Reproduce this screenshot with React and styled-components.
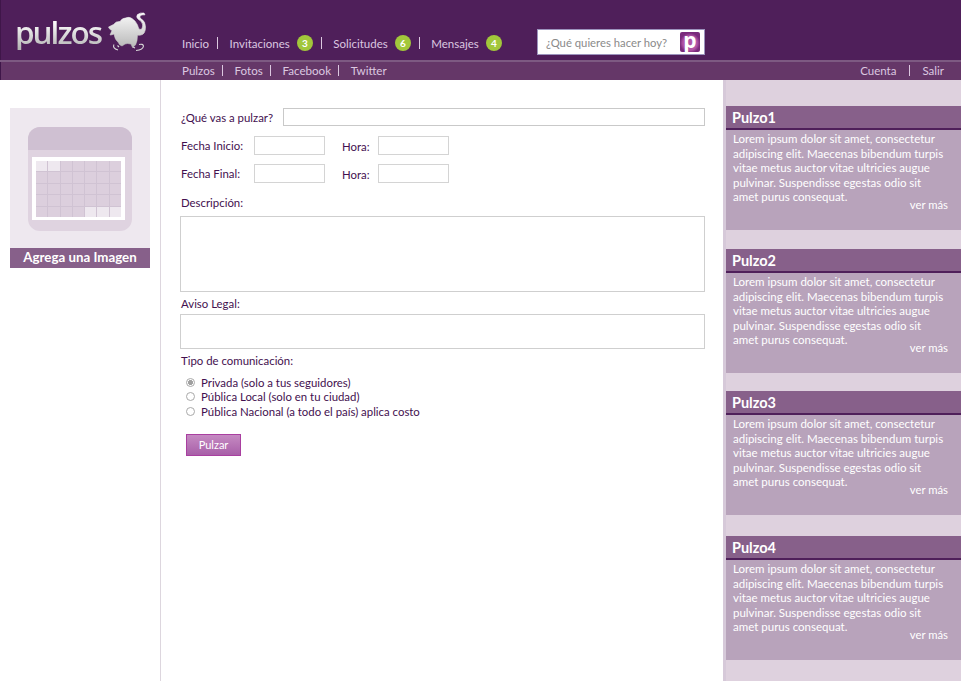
import React from "react";
import styled, { createGlobalStyle } from "styled-components";

const GlobalStyle = createGlobalStyle`
    html, body {
        margin: 0;
        padding: 0;
        background: #fff;
    }
    body {
        font-family: Lato, "Open Sans", sans-serif;
    }
`;

const mainLinks = [
    { label: "Inicio" },
    { label: "Invitaciones", count: 3 },
    { label: "Solicitudes", count: 6 },
    { label: "Mensajes", count: 4 },
];
const subLinks = ["Pulzos", "Fotos", "Facebook", "Twitter"];
const pulzos = [
    { title: "Pulzo1", gap: 19 },
    { title: "Pulzo2", gap: 18 },
    { title: "Pulzo3", gap: 21 },
    { title: "Pulzo4", gap: 0 },
];
const lorem =
    "Lorem ipsum dolor sit amet, consectetur adipiscing elit. Maecenas bibendum turpis vitae metus auctor vitae ultricies augue pulvinar. Suspendisse egestas odio sit amet purus consequat.";

function Elephant() {
    return (
        <ElephantSvg width="42" height="40" viewBox="0 0 42 40">
            <defs>
                <linearGradient id="silver" x1="0" y1="0" x2="0" y2="1">
                    <stop offset="0" stopColor="#fafafa" />
                    <stop offset="1" stopColor="#b8b8b8" />
                </linearGradient>
            </defs>
            <path
                fill="url(#silver)"
                stroke="url(#silver)"
                strokeWidth="0.6"
                strokeLinejoin="round"
                d="M1.5 15 L6.5 12.5 Q9 9 13 9.5 Q15 6 18.5 6 Q22 4.5 25 6.5 Q29 9 30.5 13 Q31.5 17 33 17.5 Q35.5 17.5 35.7 13 Q35.5 9.5 31.5 7.5 Q28.5 5 30.5 2.5 Q33 0.5 37 1 L38 2.8 Q34.5 2.5 33 4 Q32 5.5 34.5 7 Q38.5 9.5 38.5 15 Q38.5 22 34 23 Q31.5 23.5 30.5 23 Q30.5 29 28.5 33 L25.5 35.5 L24 32 Q20 31 18 32 L15 34 Q12 33 11 30 Q8 28 7 22 Q5 23 3 23 L5 18.5 Q2.5 18 1.5 15 Z"
            />
            <path
                fill="none"
                stroke="#d8d8d8"
                strokeWidth="1.1"
                d="M11 38 Q5 36 7 32.5 M10.5 33.5 L12 35 M29 38.5 Q36 38 36.5 34 Q36 31.5 32 32.5 M26 35 L28 36"
            />
        </ElephantSvg>
    );
}

function CalendarIcon() {
    const faded = [0, 1, 32, 33, 34];
    return (
        <CalendarFrame>
            <CalendarTop />
            <CalendarSheet>
                <CalendarGrid>
                    {Array.from({ length: 35 }, (_, i) => (
                        <CalendarCell key={i} $faded={faded.includes(i)} />
                    ))}
                </CalendarGrid>
            </CalendarSheet>
        </CalendarFrame>
    );
}

export default function App() {
    return (
        <Page>
            <GlobalStyle />
            <TopBar>
                <Logo>
                    <LogoText>pulzos</LogoText>
                    <Elephant />
                </Logo>
                <MainNav>
                    {mainLinks.map((link, i) => (
                        <MainLink key={link.label} $divider={i < 3}>
                            {link.label}
                            {link.count && <Badge>{link.count}</Badge>}
                        </MainLink>
                    ))}
                </MainNav>
                <SearchBox>
                    ¿Qué quieres hacer hoy?
                    <SearchMark>p</SearchMark>
                </SearchBox>
            </TopBar>
            <SubBar>
                <SubNav>
                    {subLinks.map((link, i) => (
                        <SubLink key={link} $divider={i < 3}>
                            {link}
                        </SubLink>
                    ))}
                </SubNav>
                <AccountNav>
                    <AccountLink $divider>Cuenta</AccountLink>
                    <AccountLink>Salir</AccountLink>
                </AccountNav>
            </SubBar>
            <Body>
                <LeftColumn>
                    <ImageCard>
                        <CalendarIcon />
                        <ImageCaption>Agrega una Imagen</ImageCaption>
                    </ImageCard>
                </LeftColumn>
                <FormColumn>
                    <QuestionRow>
                        <Label>¿Qué vas a pulzar?</Label>
                        <TextInput />
                    </QuestionRow>
                    <DateRow>
                        <DateLabel>Fecha Inicio:</DateLabel>
                        <ShortInput />
                        <HourLabel>Hora:</HourLabel>
                        <ShortInput />
                    </DateRow>
                    <DateRow>
                        <DateLabel>Fecha Final:</DateLabel>
                        <ShortInput />
                        <HourLabel>Hora:</HourLabel>
                        <ShortInput />
                    </DateRow>
                    <DescriptionLabel>Descripción:</DescriptionLabel>
                    <DescriptionBox />
                    <LegalLabel>Aviso Legal:</LegalLabel>
                    <LegalBox />
                    <TypeLabel>Tipo de comunicación:</TypeLabel>
                    <Options>
                        <Option>
                            <Radio $checked />
                            Privada (solo a tus seguidores)
                        </Option>
                        <Option>
                            <Radio />
                            Pública Local (solo en tu ciudad)
                        </Option>
                        <Option>
                            <Radio />
                            Pública Nacional (a todo el país) aplica costo
                        </Option>
                    </Options>
                    <SubmitButton>Pulzar</SubmitButton>
                </FormColumn>
                <Sidebar>
                    {pulzos.map((pulzo) => (
                        <PulzoCard key={pulzo.title} $gap={pulzo.gap}>
                            <PulzoTitle>{pulzo.title}</PulzoTitle>
                            <PulzoText>
                                {lorem}
                                <MoreLink>ver más</MoreLink>
                            </PulzoText>
                        </PulzoCard>
                    ))}
                </Sidebar>
            </Body>
        </Page>
    );
}

const Page = styled.div`
    width: 961px;
    height: 681px;
    overflow: hidden;
    display: flex;
    flex-direction: column;
`;

const TopBar = styled.header`
    height: 60px;
    background: #4f1f5a;
    box-shadow: inset 1px 0 0 #3f1649;
    display: flex;
    align-items: flex-end;
    box-sizing: border-box;
    padding-left: 15px;
`;

const Logo = styled.div`
    width: 167px;
    height: 48px;
    flex-shrink: 0;
    display: flex;
    align-items: flex-start;
`;

const LogoText = styled.span`
    width: 92px;
    margin-top: 2px;
    font-family: "Open Sans", sans-serif;
    font-size: 31.5px;
    font-weight: 600;
    line-height: 36px;
    letter-spacing: -2px;
    background: linear-gradient(#fbfbfb 25%, #b5b5b5 95%);
    -webkit-background-clip: text;
    background-clip: text;
    color: transparent;
`;

const ElephantSvg = styled.svg`
    flex-shrink: 0;
`;

const MainNav = styled.nav`
    width: 355px;
    flex-shrink: 0;
    display: flex;
    align-items: center;
    height: 30px;
    margin-bottom: 2px;
`;

const MainLink = styled.span`
    display: flex;
    align-items: center;
    font-size: 11.5px;
    color: #dcc8e0;
    &::after {
        content: "";
        display: ${(p) => (p.$divider ? "block" : "none")};
        width: 1px;
        height: 12px;
        margin: 0 11.5px 0 8px;
        background: #dcc8e0;
    }
`;

const Badge = styled.span`
    width: 16px;
    height: 16px;
    margin-left: 7px;
    border-radius: 50%;
    background: #a2c73b;
    color: #fff;
    font-size: 10px;
    font-weight: 700;
    display: flex;
    align-items: center;
    justify-content: center;
`;

const SearchBox = styled.div`
    width: 168px;
    height: 26px;
    box-sizing: border-box;
    margin-bottom: 5px;
    padding: 0 4px 0 8px;
    flex-shrink: 0;
    display: flex;
    align-items: center;
    justify-content: space-between;
    background: #fff;
    border: 1px solid #9c93bd;
    font-size: 11.3px;
    color: #8a8a8a;
`;

const SearchMark = styled.span`
    width: 20px;
    height: 20px;
    border-radius: 2px;
    background: radial-gradient(circle at 50% 55%, #b255a8 0 7px, #7a2a7c 10px);
    color: #fff;
    font-family: "Open Sans", sans-serif;
    font-size: 21px;
    line-height: 17px;
    font-weight: 700;
    text-align: center;
`;

const SubBar = styled.div`
    height: 20px;
    box-sizing: border-box;
    border-top: 2px solid #7d5a82;
    background: #653768;
    box-shadow: inset 1px 0 0 #3f1649;
    display: flex;
    align-items: center;
    justify-content: space-between;
    padding: 0 17px 1px 182px;
`;

const SubNav = styled.nav`
    display: flex;
    align-items: center;
`;

const AccountNav = styled(SubNav)``;

const SubLink = styled.span`
    display: flex;
    align-items: center;
    font-size: 11.6px;
    color: #dcc8e0;
    &::after {
        content: "";
        display: ${(p) => (p.$divider ? "block" : "none")};
        width: 1px;
        height: 11px;
        margin: 0 11.7px 0 7px;
        background: #dcc8e0;
    }
`;

const AccountLink = styled(SubLink)`
    font-size: 11.5px;
    &::after {
        margin: 0 12px 0 13px;
    }
`;

const Body = styled.main`
    flex: 1;
    display: flex;
    min-height: 0;
`;

const LeftColumn = styled.aside`
    width: 161px;
    box-sizing: border-box;
    flex-shrink: 0;
    padding: 28px 10px 0;
    border-right: 1px solid #ddd6de;
`;

const ImageCard = styled.div`
    width: 140px;
    background: #eee8ef;
    padding-top: 19px;
`;

const CalendarFrame = styled.div`
    width: 104px;
    height: 104px;
    margin: 0 auto 17px;
    border-radius: 12px;
    overflow: hidden;
    background: #dfd3e0;
`;

const CalendarTop = styled.div`
    height: 23px;
    background: #cfc0d2;
    margin-bottom: 7px;
`;

const CalendarSheet = styled.div`
    width: 93px;
    height: 63px;
    margin-left: 4px;
    box-sizing: border-box;
    padding: 4px 4px 3px;
    background: #fff;
`;

const CalendarGrid = styled.div`
    height: 100%;
    background: #d0c3d3;
    display: grid;
    grid-template-columns: repeat(7, 1fr);
    grid-template-rows: repeat(5, 1fr);
    gap: 1px;
`;

const CalendarCell = styled.span`
    background: ${(p) => (p.$faded ? "#eee8ef" : "#dccfdd")};
`;

const ImageCaption = styled.div`
    height: 20px;
    background: #87608a;
    color: #fff;
    font-size: 13.3px;
    font-weight: 700;
    line-height: 19px;
    text-align: center;
`;

const FormColumn = styled.section`
    width: 562px;
    box-sizing: border-box;
    flex-shrink: 0;
    padding: 28px 18px 0 20px;
    color: #43104f;
    font-size: 11.4px;
`;

const QuestionRow = styled.div`
    display: flex;
    align-items: center;
    justify-content: space-between;
    height: 18px;
    margin-bottom: 10px;
`;

const Label = styled.span`
    white-space: nowrap;
`;

const TextInput = styled.div`
    width: 422px;
    height: 18px;
    box-sizing: border-box;
    border: 1px solid #c9c9c9;
`;

const DateRow = styled.div`
    display: flex;
    align-items: center;
    height: 19px;
    margin-bottom: 9px;
`;

const DateLabel = styled.span`
    width: 73px;
    white-space: nowrap;
    margin-bottom: 1px;
`;

const HourLabel = styled.span`
    width: 36px;
    margin-left: 17px;
    margin-top: 1px;
`;

const ShortInput = styled.div`
    width: 71px;
    height: 19px;
    box-sizing: border-box;
    border: 1px solid #d4d4d4;
`;

const DescriptionLabel = styled.div`
    height: 18px;
    line-height: 18px;
    margin-top: 11px;
`;

const DescriptionBox = styled.div`
    height: 76px;
    margin: 4px 0 2px -1px;
    width: 525px;
    box-sizing: border-box;
    border: 1px solid #cfcfcf;
`;

const LegalLabel = styled.div`
    height: 18px;
    line-height: 18px;
    margin-top: 3px;
`;

const LegalBox = styled(DescriptionBox)`
    height: 35px;
    margin-top: 1px;
    margin-bottom: 3px;
`;

const TypeLabel = styled.div`
    height: 18px;
    line-height: 18px;
`;

const Options = styled.div`
    margin: 5px 0 0 5px;
    display: flex;
    flex-direction: column;
`;

const Option = styled.div`
    display: flex;
    align-items: center;
    gap: 6px;
    height: 14.5px;
`;

const Radio = styled.span`
    width: 9px;
    height: 9px;
    box-sizing: border-box;
    border: 1px solid #a9a9a9;
    border-radius: 50%;
    background: ${(p) =>
        p.$checked ? "radial-gradient(circle, #a0a0a0 0 2.2px, #fff 2.8px)" : "#fff"};
`;

const SubmitButton = styled.button`
    display: block;
    width: 55px;
    height: 22px;
    margin: 15px 0 0 5px;
    padding: 0;
    box-sizing: border-box;
    border: 1px solid #a93fa0;
    background: linear-gradient(#c58ac2, #a85fa8);
    color: #fff;
    font-family: inherit;
    font-size: 11px;
`;

const Sidebar = styled.aside`
    flex: 1;
    box-sizing: border-box;
    padding-top: 26px;
    border-left: 3px solid #d6c9d9;
    background: #ded1de;
`;

const PulzoCard = styled.article`
    height: 124px;
    margin-bottom: ${(p) => p.$gap}px;
    background: #b8a3bb;
`;

const PulzoTitle = styled.h3`
    margin: 0;
    height: 24px;
    box-sizing: border-box;
    padding-left: 6px;
    background: #87608a;
    border-bottom: 2px solid #4f1f5a;
    color: #fff;
    font-size: 14.5px;
    font-weight: 700;
    line-height: 23px;
`;

const PulzoText = styled.p`
    margin: 0;
    padding: 2px 13px 0 7px;
    color: #fff;
    font-size: 11.5px;
    line-height: 14.5px;
`;

const MoreLink = styled.span`
    display: block;
    text-align: right;
    color: #fff;
    font-size: 11.3px;
    line-height: 14px;
    margin-top: -7px;
`;
